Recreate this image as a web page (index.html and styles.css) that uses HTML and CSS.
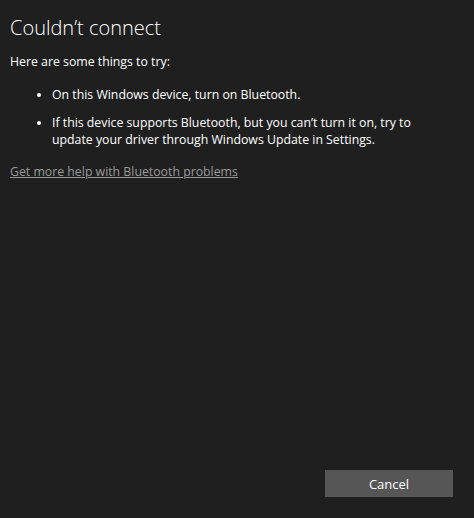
FILE: index.html
```html
<!DOCTYPE html>
<html>

<head>
    <meta charset="UTF-8">
    <title>Couldn't connect</title>
    <link rel="stylesheet" href="styles.css">
</head>

<body>
    <div id="dialog">
        <div id="content">
            <h1 class="title">Couldn’t connect</h1>
            <p class="intro">Here are some things to try:</p>
            <ul class="tips">
                <li>On this Windows device, turn on Bluetooth.</li>
                <li>If this device supports Bluetooth, but you can’t turn it on, try to update your driver through Windows Update in Settings.</li>
            </ul>
            <a class="helpLink" href="#">Get more help with Bluetooth problems</a>
        </div>
        <div id="footer">
            <button type="button" class="cancelButton">Cancel</button>
        </div>
    </div>
</body>

</html>
```

FILE: styles.css
```css
html, body {
    height: 100%;
}

body {
    margin: 0;
    background-color: #1f1f1f;
    color: #ffffff;
    font-family: "Open Sans", "Noto Sans", sans-serif;
    font-size: 12.3px;
}

#dialog {
    display: flex;
    flex-direction: column;
    height: 100%;
    box-sizing: border-box;
    padding: 14px 21px 21px 10px;
}

#content {
    flex: 1;
}

.title {
    margin: 0;
    font-size: 20px;
    font-weight: 300;
    line-height: 28px;
}

.intro {
    margin: 11px 0 0 0;
    line-height: 18px;
}

.tips {
    margin: 15px 0 0 0;
    padding-left: 42px;
    line-height: 17px;
}

.tips li {
    margin-bottom: 11px;
}

.helpLink {
    display: inline-block;
    margin-top: 4px;
    color: #9a9a9a;
    text-decoration: underline;
}

#footer {
    display: flex;
    justify-content: flex-end;
}

.cancelButton {
    width: 128px;
    height: 27px;
    border: none;
    background-color: #565656;
    color: #ffffff;
    font-family: inherit;
    font-size: 13px;
}
```
